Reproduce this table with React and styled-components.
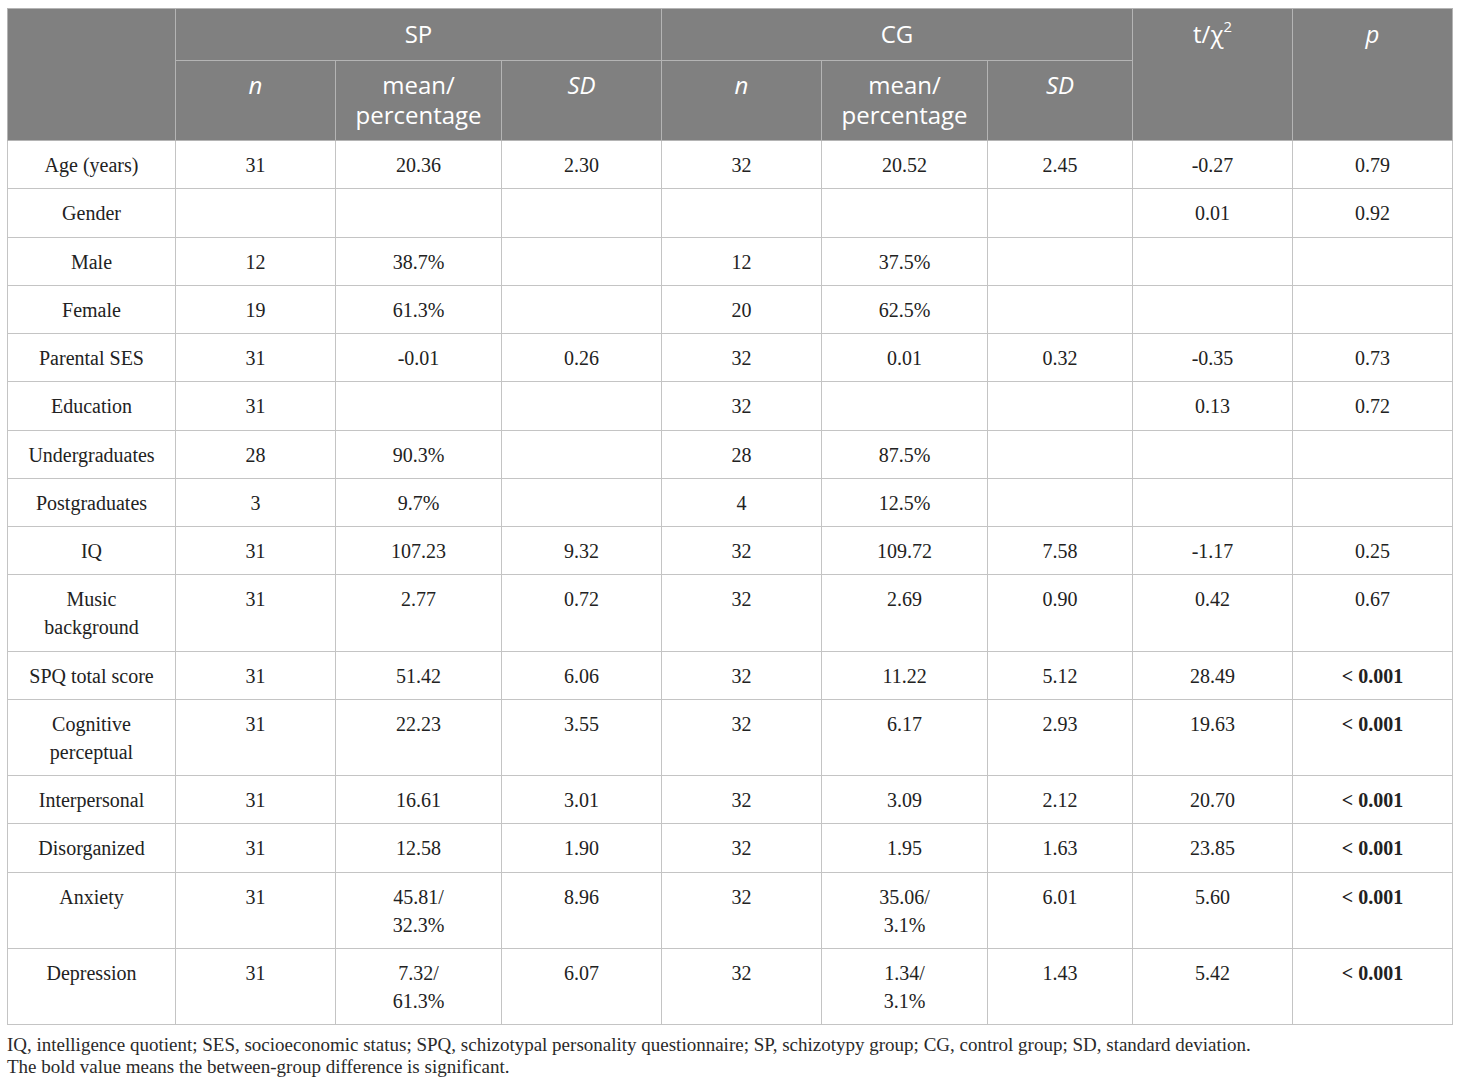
import React from "react";
import styled, { createGlobalStyle } from "styled-components";

const GlobalStyle = createGlobalStyle`
  body {
    margin: 0;
    background: #fff;
  }
`;

const Page = styled.div`
  padding: 8px 8px 0 7px;
  font-family: "Liberation Serif", "Times New Roman", serif;
  color: #222;
`;

const Table = styled.table`
  border-collapse: collapse;
  table-layout: fixed;
  width: 1445px;
`;

const Th = styled.th`
  background: #808080;
  color: #fff;
  font-family: "Open Sans", "Noto Sans", sans-serif;
  font-weight: 400;
  font-size: 24px;
  line-height: 30px;
  text-align: center;
  vertical-align: top;
  padding: ${(p) => (p.$top ? "10px 6px 11px" : "9px 6px 10px")};
  border: 1px solid #b4b4b4;
  font-style: ${(p) => (p.$italic ? "italic" : "normal")};
`;

const HeadLine = styled.span`
  display: block;
`;

const Sup = styled.sup`
  font-size: 0.62em;
  vertical-align: 0.75em;
  line-height: 0;
`;

const Td = styled.td`
  font-size: 20px;
  line-height: 28px;
  text-align: center;
  vertical-align: top;
  padding: 10px 6px 9.25px;
  border: 1px solid #c4c4c4;
  font-weight: ${(p) => (p.$bold ? 700 : 400)};
`;

const Notes = styled.div`
  margin-top: 9px;
  font-size: 19px;
  line-height: 22px;
  color: #2a2a2a;
`;

const widths = [168, 160, 166, 160, 160, 166, 145, 160, 160];

const rows = [
  ["Age (years)", "31", "20.36", "2.30", "32", "20.52", "2.45", "-0.27", "0.79"],
  ["Gender", "", "", "", "", "", "", "0.01", "0.92"],
  ["Male", "12", "38.7%", "", "12", "37.5%", "", "", ""],
  ["Female", "19", "61.3%", "", "20", "62.5%", "", "", ""],
  ["Parental SES", "31", "-0.01", "0.26", "32", "0.01", "0.32", "-0.35", "0.73"],
  ["Education", "31", "", "", "32", "", "", "0.13", "0.72"],
  ["Undergraduates", "28", "90.3%", "", "28", "87.5%", "", "", ""],
  ["Postgraduates", "3", "9.7%", "", "4", "12.5%", "", "", ""],
  ["IQ", "31", "107.23", "9.32", "32", "109.72", "7.58", "-1.17", "0.25"],
  [["Music", "background"], "31", "2.77", "0.72", "32", "2.69", "0.90", "0.42", "0.67"],
  ["SPQ total score", "31", "51.42", "6.06", "32", "11.22", "5.12", "28.49", "< 0.001", true],
  [["Cognitive", "perceptual"], "31", "22.23", "3.55", "32", "6.17", "2.93", "19.63", "< 0.001", true],
  ["Interpersonal", "31", "16.61", "3.01", "32", "3.09", "2.12", "20.70", "< 0.001", true],
  ["Disorganized", "31", "12.58", "1.90", "32", "1.95", "1.63", "23.85", "< 0.001", true],
  ["Anxiety", "31", ["45.81/", "32.3%"], "8.96", "32", ["35.06/", "3.1%"], "6.01", "5.60", "< 0.001", true],
  ["Depression", "31", ["7.32/", "61.3%"], "6.07", "32", ["1.34/", "3.1%"], "1.43", "5.42", "< 0.001", true],
];

const Lines = ({ value }) =>
  Array.isArray(value)
    ? value.map((line, i) => (
        <React.Fragment key={i}>
          {i > 0 && <br />}
          {line}
        </React.Fragment>
      ))
    : value;

const App = () => {
  return (
    <Page>
      <GlobalStyle />
      <Table>
        <colgroup>
          {widths.map((w, i) => (
            <col key={i} style={{ width: w }} />
          ))}
        </colgroup>
        <thead>
          <tr>
            <Th rowSpan={2} $top />
            <Th colSpan={3} $top>SP</Th>
            <Th colSpan={3} $top>CG</Th>
            <Th rowSpan={2} $top>
              t/χ<Sup>2</Sup>
            </Th>
            <Th rowSpan={2} $top $italic>p</Th>
          </tr>
          <tr>
            <Th $italic>n</Th>
            <Th>
              <HeadLine>mean/</HeadLine>
              <HeadLine>percentage</HeadLine>
            </Th>
            <Th $italic>SD</Th>
            <Th $italic>n</Th>
            <Th>
              <HeadLine>mean/</HeadLine>
              <HeadLine>percentage</HeadLine>
            </Th>
            <Th $italic>SD</Th>
          </tr>
        </thead>
        <tbody>
          {rows.map((row, r) => (
            <tr key={r}>
              {row.slice(0, 9).map((cell, c) => (
                <Td key={c} $bold={c === 8 && row[9]}>
                  <Lines value={cell} />
                </Td>
              ))}
            </tr>
          ))}
        </tbody>
      </Table>
      <Notes>
        IQ, intelligence quotient; SES, socioeconomic status; SPQ, schizotypal personality questionnaire; SP, schizotypy group; CG, control group; SD, standard deviation.
        <br />
        The bold value means the between-group difference is significant.
      </Notes>
    </Page>
  );
};

export default App;
